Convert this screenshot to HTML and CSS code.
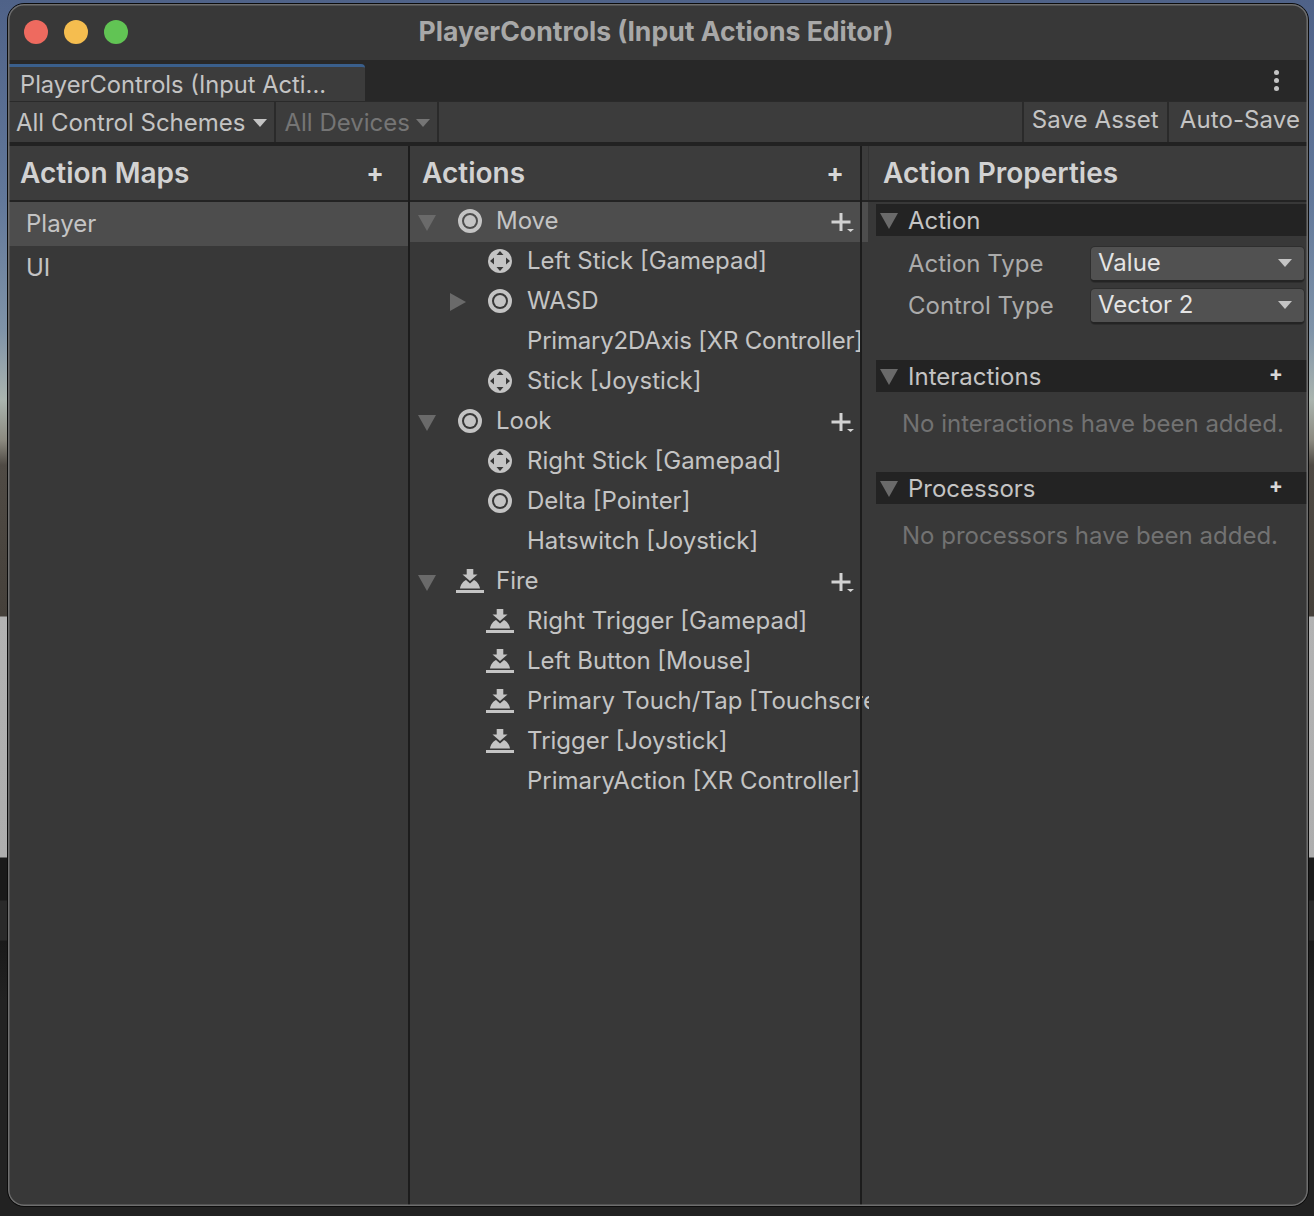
FILE: index.html
```html
<!DOCTYPE html>
<html lang="en">
<head>
<meta charset="utf-8">
<title>PlayerControls (Input Actions Editor)</title>
<link rel="stylesheet" href="styles.css">
</head>
<body>
<svg width="0" height="0" class="defs">
  <symbol id="i-value" viewBox="0 0 24 24">
    <circle cx="12" cy="12" r="10" fill="none" stroke="currentColor" stroke-width="4"/>
    <circle cx="12" cy="12" r="6" fill="currentColor"/>
  </symbol>
  <symbol id="i-stick" viewBox="0 0 24 24">
    <circle cx="12" cy="12" r="12" fill="currentColor"/>
    <path d="M12 2 15.500 6H8.500ZM12 22 8.500 18H15.500ZM2 12 6 8.500V15.500ZM22 12 18 15.500V8.500Z" fill="#383838"/>
  </symbol>
  <symbol id="i-press" viewBox="0 0 28 24">
    <path d="M10.700 0H17.300V5.500H21.500L14 12 6.500 5.500H10.700Z" fill="currentColor"/>
    <path d="M4 19.500C4.500 15.500 7.500 12 10 11L14 14.500 18 11C20.500 12 23.500 15.500 24 19.500Z" fill="currentColor"/>
    <rect x="0" y="21" width="28" height="3" fill="currentColor"/>
  </symbol>
  <symbol id="i-addmenu" viewBox="0 0 24 24">
    <path d="M8.500 1H11.500V8.500H19.500V11.500H11.500V19H8.500V11.500H.5V8.500H8.500Z" fill="currentColor"/>
    <path d="M16 17H23L19.500 20Z" fill="currentColor"/>
  </symbol>
</svg>

<div class="window">
  <header class="titlebar">
    <div class="lights">
      <span class="light red"></span>
      <span class="light yellow"></span>
      <span class="light green"></span>
    </div>
    <h1>PlayerControls (Input Actions Editor)</h1>
  </header>

  <div class="tabbar">
    <div class="tab">PlayerControls (Input Acti...</div>
    <div class="kebab"><i></i><i></i><i></i></div>
  </div>

  <div class="toolbar">
    <div class="tool">All Control Schemes <span class="caret"></span></div>
    <div class="tool off">All Devices <span class="caret"></span></div>
    <div class="tool-fill"></div>
    <div class="tool btn">Save Asset</div>
    <div class="tool btn">Auto-Save</div>
  </div>

  <main class="panes">
    <section class="pane maps">
      <div class="pane-head"><h2>Action Maps</h2><span class="plus">+</span></div>
      <div class="map-row selected">Player</div>
      <div class="map-row">UI</div>
    </section>

    <section class="pane actions">
      <div class="pane-head"><h2>Actions</h2><span class="plus">+</span></div>
      <div class="tree">
        <div class="row top selected"><span class="tri down"></span><svg class="ico"><use href="#i-value"/></svg><span class="label">Move</span><svg class="add"><use href="#i-addmenu"/></svg></div>
        <div class="row child"><svg class="ico"><use href="#i-stick"/></svg><span class="label">Left Stick [Gamepad]</span></div>
        <div class="row child"><span class="tri right"></span><svg class="ico"><use href="#i-value"/></svg><span class="label">WASD</span></div>
        <div class="row child"><span class="ico"></span><span class="label tight">Primary2DAxis [XR Controller]</span></div>
        <div class="row child"><svg class="ico"><use href="#i-stick"/></svg><span class="label">Stick [Joystick]</span></div>
        <div class="row top"><span class="tri down"></span><svg class="ico"><use href="#i-value"/></svg><span class="label">Look</span><svg class="add"><use href="#i-addmenu"/></svg></div>
        <div class="row child"><svg class="ico"><use href="#i-stick"/></svg><span class="label">Right Stick [Gamepad]</span></div>
        <div class="row child"><svg class="ico"><use href="#i-value"/></svg><span class="label">Delta [Pointer]</span></div>
        <div class="row child"><span class="ico"></span><span class="label">Hatswitch [Joystick]</span></div>
        <div class="row top"><span class="tri down"></span><svg class="ico wide"><use href="#i-press"/></svg><span class="label">Fire</span><svg class="add"><use href="#i-addmenu"/></svg></div>
        <div class="row child"><svg class="ico wide"><use href="#i-press"/></svg><span class="label">Right Trigger [Gamepad]</span></div>
        <div class="row child"><svg class="ico wide"><use href="#i-press"/></svg><span class="label">Left Button [Mouse]</span></div>
        <div class="row child"><svg class="ico wide"><use href="#i-press"/></svg><span class="label">Primary Touch/Tap [Touchscreen]</span></div>
        <div class="row child"><svg class="ico wide"><use href="#i-press"/></svg><span class="label">Trigger [Joystick]</span></div>
        <div class="row child"><span class="ico"></span><span class="label">PrimaryAction [XR Controller]</span></div>
      </div>
    </section>

    <section class="pane props">
      <div class="pane-head"><h2>Action Properties</h2></div>
      <div class="group first">
        <div class="group-head"><span class="tri down"></span>Action</div>
        <div class="field"><label>Action Type</label><div class="select">Value<span class="caret"></span></div></div>
        <div class="field"><label>Control Type</label><div class="select">Vector 2<span class="caret"></span></div></div>
      </div>
      <div class="group">
        <div class="group-head"><span class="tri down"></span>Interactions<span class="plus">+</span></div>
        <p class="empty">No interactions have been added.</p>
      </div>
      <div class="group">
        <div class="group-head"><span class="tri down"></span>Processors<span class="plus">+</span></div>
        <p class="empty">No processors have been added.</p>
      </div>
    </section>
  </main>
</div>
</body>
</html>
```

FILE: styles.css
```css
* {
  box-sizing: border-box;
}
html, body {
  height: 100%;
  margin: 0;
}
body {
  padding: 4px 6px 10px 8px;
  background: linear-gradient(#4f6288 0, #62789a 200px, #7f93a8 330px, #aab4ae 400px, #8c8a80 440px, #4f4a44 465px,
    #45403a 616px, #b2b2b2 617px, #adadad 857px, #1a1a1a 858px, #1a1a1a 900px, #2a2a2a 901px, #2a2a2a 940px, #1a1a1a 941px, #222 1000px);
  color: #d2d2d2;
  font: 24px/1 Inter, "Liberation Sans", sans-serif;
  overflow: hidden;
}
.defs {
  position: absolute;
}
h1, h2, p {
  margin: 0;
}

.window {
  display: flex;
  flex-direction: column;
  height: 100%;
  position: relative;
  background: #383838;
  border-radius: 16px;
  overflow: hidden;
  outline: 1px solid #0c0c0c;
}
/* light rim sits on top of the panes */
.window::after {
  content: "";
  position: absolute;
  inset: 0;
  z-index: 2;
  border-radius: 16px;
  box-shadow: inset 0 0 0 1.5px #6e6e6e;
  pointer-events: none;
}

.titlebar {
  display: grid;
  grid-template-columns: 1fr auto 1fr;
  align-items: center;
  flex: 0 0 56px;
  padding: 0 20px 2px 16px;
}
.titlebar h1 {
  font-size: 26.6px;
  font-weight: 700;
  color: #a8a8a8;
}
.lights {
  display: flex;
  gap: 16px;
  padding-top: 2px;
}
.light {
  width: 24px;
  height: 24px;
  border-radius: 50%;
}
.red { background: #ee6a5f; }
.yellow { background: #f5bd4f; }
.green { background: #61c454; }

.tabbar {
  display: flex;
  justify-content: space-between;
  flex: 0 0 41px;
  padding-top: 4px;
  background: #282828;
}
.tab {
  width: 357px;
  padding: 6px 0 0 12px;
  background: #3c3c3c;
  border-top: 3px solid #3a5f8c;
  border-top-right-radius: 4px;
  color: #c4c4c4;
  font-size: 23.7px;
}
.kebab {
  display: flex;
  flex-direction: column;
  gap: 3px;
  padding: 6px 29px 0 0;
}
.kebab i {
  width: 5px;
  height: 5px;
  border-radius: 50%;
  background: #c4c4c4;
}

.toolbar {
  display: flex;
  flex: 0 0 45px;
  background: #3c3c3c;
  border-bottom: 4px solid #222;
  border-top: 1px solid #2a2a2a;
}
.tool {
  display: flex;
  align-items: center;
  gap: 8px;
  padding: 2px 7px 0 8px;
  border-right: 2px solid #2a2a2a;
  color: #c4c4c4;
  white-space: nowrap;
}
.tool.off {
  gap: 6px;
  color: #757575;
}
.tool.off .caret {
  border-top-color: #757575;
}
.tool-fill {
  flex: 1;
  border-right: 2px solid #2a2a2a;
}
.btn {
  padding: 0 8px 4px;
  letter-spacing: .1px;
}
.btn:last-child {
  padding-left: 11px;
  border-right: 0;
}
.caret {
  display: inline-block;
  width: 0;
  height: 0;
  border: 7.5px solid transparent;
  border-bottom: 0;
  border-top: 8px solid #c4c4c4;
}

.panes {
  display: grid;
  grid-template-columns: 402px 452px 1fr;
  flex: 1;
  min-height: 0;
}
.pane {
  min-width: 0;
  border-right: 2px solid #1c1c1c;
}
.pane-head {
  display: flex;
  align-items: center;
  justify-content: space-between;
  height: 56px;
  padding: 0 24px 0 12px;
  background: #3c3c3c;
  border-bottom: 2px solid #232323;
}
.pane-head h2 {
  font-size: 28px;
  font-weight: 600;
  color: #d2d2d2;
}
.plus {
  font-size: 26px;
  font-weight: 700;
  color: #d8d8d8;
}

.map-row {
  height: 44px;
  padding: 10px 18px;
  color: #c4c4c4;
}
.selected {
  background: #4d4d4d;
}

/* the tree runs 8px past its divider, the divider stays on top */
.actions {
  position: relative;
  z-index: 1;
  border-right: 0;
}
.actions::after {
  content: "";
  position: absolute;
  top: 0;
  bottom: 0;
  right: 0;
  width: 2px;
  background: #1c1c1c;
}
.actions .pane-head {
  padding-right: 18px;
}
.tree {
  width: 459px;
  overflow: hidden;
}
.row {
  display: flex;
  align-items: center;
  height: 40px;
  width: 458px;
  padding: 0 0 2px 8px;
  white-space: nowrap;
  position: relative;
  color: #c4c4c4;
}
.row.child {
  padding-left: 78px;
}
.row.child .tri.right {
  position: absolute;
  left: 40px;
  top: 11px;
}
.ico.wide {
  width: 28px;
  margin: 0 -2px;
}
.top .tri {
  margin: 4px 22px 0 0;
}
.top .label {
  margin-left: 14px;
}
.ico {
  flex: none;
  width: 24px;
  height: 24px;
  color: #c4c4c4;
}
.label {
  margin-left: 15px;
}
.label.tight {
  letter-spacing: -.2px;
}
.add {
  position: absolute;
  right: 13px;
  top: 10px;
  width: 24px;
  height: 24px;
  color: #d2d2d2;
}
.tri {
  flex: none;
  width: 0;
  height: 0;
  display: inline-block;
  border-style: solid;
  border-color: transparent;
}
.tri.down {
  border-width: 16px 9px 0;
  border-top-color: #6a6a6a;
}
.tri.right {
  border-width: 9px 0 9px 16px;
  border-left-color: #6a6a6a;
}

.props {
  border-right: 0;
}
.props .pane-head {
  padding-left: 21px;
  background: linear-gradient(90deg, #3c3c3c 6px, #333 6px, #333 7px, #3c3c3c 7px);
}
.group {
  margin-left: 14px;
}
.group-head {
  display: flex;
  align-items: center;
  height: 32px;
  padding: 2px 0 0 4px;
  background: #232323;
  color: #c4c4c4;
  position: relative;
}
.first {
  padding: 2px 0 33px;
}
.first .group-head {
  margin-bottom: 7px;
}
.group-head .tri {
  margin-right: 10px;
}
.group-head .plus {
  position: absolute;
  right: 25px;
  top: 3px;
  font-size: 21px;
}
.field {
  display: flex;
  align-items: center;
  height: 42px;
  padding-left: 32px;
  color: #ababab;
}
.field label {
  width: 183px;
}
.select {
  display: flex;
  align-items: center;
  justify-content: space-between;
  width: 213px;
  height: 35px;
  padding: 0 12px 0 7px;
  background: #515151;
  border-radius: 4px;
  border-bottom: 2px solid #242424;
  box-shadow: 0 0 0 1px #2e2e2e;
  color: #e4e4e4;
}
.empty {
  height: 80px;
  padding: 20px 0 0 26px;
  color: #727272;
  white-space: nowrap;
}
```
